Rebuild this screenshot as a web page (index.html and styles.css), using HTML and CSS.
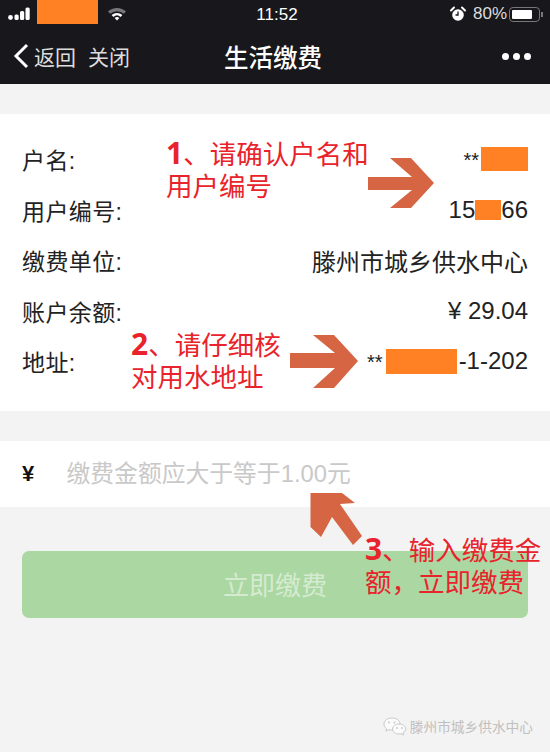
FILE: index.html
```html
<!DOCTYPE html>
<html lang="zh-CN">
<head>
    <meta charset="UTF-8">
    <title>生活缴费</title>
    <link rel="stylesheet" href="styles.css">
</head>
<body>
    <div class="page">
        <header class="top">
            <div class="status">
                <div class="status-left">
                    <svg class="signal" width="24" height="14" viewBox="0 0 24 14">
                        <circle cx="2.5" cy="10.5" r="2.4" fill="#fff"/>
                        <rect x="6.5" y="7.5" width="4.2" height="5.5" rx="1.5" fill="#fff"/>
                        <rect x="12" y="4" width="4.2" height="9" rx="1.5" fill="#fff"/>
                        <rect x="17.5" y="0.5" width="4.2" height="12.5" rx="1.5" fill="#fff"/>
                    </svg>
                    <span class="blot blot-carrier"></span>
                    <svg class="wifi" width="20" height="14" viewBox="0 0 20 14">
                        <path d="M1 4.5 A13 13 0 0 1 19 4.5 L16.8 6.8 A10 10 0 0 0 3.2 6.8 Z" fill="#77777a"/>
                        <path d="M4.6 8 A8 8 0 0 1 15.4 8 L13.6 9.9 A5.4 5.4 0 0 0 6.4 9.9 Z" fill="#fff"/>
                        <path d="M7.6 11 A3.6 3.6 0 0 1 12.4 11 L10 13.6 Z" fill="#fff"/>
                    </svg>
                </div>
                <div class="clock">11:52</div>
                <div class="status-right">
                    <svg width="16" height="16" viewBox="0 0 16 16">
                        <circle cx="8" cy="9" r="5.8" fill="#fff"/>
                        <path d="M8 5.5 V9 H5.5" fill="none" stroke="#18181c" stroke-width="1.3"/>
                        <path d="M1 4.5 L4 1.5 M15 4.5 L12 1.5" stroke="#fff" stroke-width="2" stroke-linecap="round"/>
                    </svg>
                    <span class="battery-text">80%</span>
                    <span class="battery"><span class="battery-level"></span></span>
                    <span class="battery-tip"></span>
                </div>
            </div>
            <nav class="nav">
                <div class="nav-left">
                    <svg width="16" height="26" viewBox="0 0 16 26">
                        <path d="M14 2 L3 13 L14 24" fill="none" stroke="#fff" stroke-width="3"/>
                    </svg>
                    <span class="nav-back">返回</span>
                    <span class="nav-close">关闭</span>
                </div>
                <div class="nav-title">生活缴费</div>
                <div class="nav-more"><i></i><i></i><i></i></div>
            </nav>
        </header>

        <section class="info">
            <div class="row"><span class="label">户名:</span><span><span class="stars">**</span><span class="blot blot-name"></span></span></div>
            <div class="row"><span class="label">用户编号:</span><span>15<span class="blot blot-code"></span>66</span></div>
            <div class="row"><span class="label">缴费单位:</span><span>滕州市城乡供水中心</span></div>
            <div class="row"><span class="label">账户余额:</span><span>¥ 29.04</span></div>
            <div class="row"><span class="label">地址:</span><span><span class="stars">**</span><span class="blot blot-addr"></span>-1-202</span></div>
        </section>

        <section class="amount">
            <span class="yen">¥</span>
            <input class="amount-input" type="text" placeholder="缴费金额应大于等于1.00元">
        </section>

        <div class="pay"><button class="pay-button" disabled>立即缴费</button></div>

        <footer class="mark">
            <svg width="24" height="19" viewBox="0 0 24 19">
                <path d="M9 1 C4.500 1 1 3.600 1 7 C1 9 2 10.500 3.500 11.600 L3 14 L5.800 12.600 C6.800 12.900 7.800 13 9 13 C13.500 13 17 10.400 17 7 C17 3.600 13.500 1 9 1 Z" fill="#fbfbfb" stroke="#c8c8c8"/>
                <path d="M16 7 C12.500 7 9.500 9.300 9.500 12 C9.500 14.700 12.500 17 16 17 C16.800 17 17.500 16.900 18.200 16.700 L20.500 18 L20 15.700 C21.600 14.700 22.800 13.400 22.800 12 C22.800 9.300 19.500 7 16 7 Z" fill="#fbfbfb" stroke="#c8c8c8"/>
                <circle cx="6" cy="5.500" r="1" fill="#c8c8c8"/>
                <circle cx="11.500" cy="5.500" r="1" fill="#c8c8c8"/>
                <circle cx="14" cy="11" r="0.900" fill="#c8c8c8"/>
                <circle cx="19" cy="11" r="0.900" fill="#c8c8c8"/>
            </svg>
            <span>滕州市城乡供水中心</span>
        </footer>

        <!-- annotations drawn over the screenshot -->
        <p class="note note-1"><b>1</b>、请确认户名和<br>用户编号</p>
        <p class="note note-2"><b>2</b>、请仔细核<br>对用水地址</p>
        <p class="note note-3"><b>3</b>、输入缴费金<br>额，立即缴费</p>
        <svg class="arrows" width="550" height="752" viewBox="0 0 550 752">
            <path d="M368 177 H412 L390 158 H411 L434 183 L411 208 H390 L412 190 H368 Z"/>
            <path d="M290 353 H335 L313 335 H334 L358 361 L334 388 H313 L335 368 H290 Z"/>
            <path d="M310.500 493 H342 L355 503 L340 504 L362 536 L353 545 L332 517 L321 537 L310.500 527 Z"/>
        </svg>
    </div>
</body>
</html>
```

FILE: styles.css
```css
* {
    box-sizing: border-box;
}
body {
    margin: 0;
    background: #f3f3f3;
    color: #222;
    font-family: "Liberation Sans", "Noto Sans CJK SC", sans-serif;
}
.page {
    position: relative;
    width: 550px;
    height: 752px;
    overflow: hidden;
}
.top {
    height: 84px;
    background: #18181c;
    color: #fff;
}
.status {
    display: flex;
    justify-content: space-between;
    align-items: center;
    height: 28px;
    padding: 0 7px 0 8px;
    position: relative;
}
.status-left, .status-right {
    display: flex;
    align-items: center;
}
.status-right {
    gap: 7px;
}
.blot {
    display: inline-block;
    background: #ff8124;
}
.blot-carrier {
    width: 61px;
    height: 24px;
    margin: 0 9px 4px 5px;
}
.clock {
    position: absolute;
    left: 4px;
    right: 0;
    text-align: center;
    font-size: 17px;
    padding-top: 1px;
}
.battery-text {
    font-size: 17px;
    color: #ddd;
    margin-right: -5px;
}
.battery {
    display: block;
    width: 31px;
    height: 15px;
    padding: 2px;
    border: 1px solid #777;
    border-radius: 4px;
}
.battery-level {
    display: block;
    width: 80%;
    height: 100%;
    background: #fff;
    border-radius: 1px;
}
.battery-tip {
    width: 2px;
    height: 5px;
    margin-left: -6px;
    background: #777;
}
.nav {
    display: flex;
    align-items: center;
    justify-content: space-between;
    height: 56px;
    padding: 0 19px 0 13px;
    position: relative;
}
.nav-left {
    display: flex;
    align-items: center;
    font-size: 21px;
    color: #ddd;
}
.nav-back {
    margin-left: 5px;
}
.nav-close {
    margin-left: 12px;
}
.nav-title {
    position: absolute;
    left: 0;
    right: 4px;
    text-align: center;
    font-size: 24.500px;
    font-weight: 500;
}
.nav-more {
    display: flex;
    gap: 4px;
}
.nav-more i {
    width: 7px;
    height: 7px;
    border-radius: 50%;
    background: #fff;
}
.info {
    margin-top: 30px;
    padding: 20px 22px 24.500px;
    background: #fff;
    font-size: 24px;
}
.row {
    display: flex;
    justify-content: space-between;
    align-items: center;
    height: 50.500px;
}
.label {
    font-size: 23px;
    letter-spacing: 0.400px;
}
.stars {
    font-size: 20px;
}
.blot-name {
    width: 47px;
    height: 24px;
    margin-left: 2px;
    vertical-align: -4px;
}
.blot-code {
    width: 26px;
    height: 20px;
    vertical-align: -2px;
}
.blot-addr {
    width: 71px;
    height: 25px;
    margin: 0 2px 0 3px;
    vertical-align: -5px;
}
.amount {
    display: flex;
    align-items: center;
    height: 66px;
    margin-top: 30px;
    padding: 0 22px;
    background: #fff;
}
.yen {
    width: 44.500px;
    font-size: 22px;
    font-weight: bold;
    color: #111;
}
.amount-input {
    flex: 1;
    border: none;
    padding: 0;
    font: inherit;
    font-size: 23.800px;
    background: transparent;
}
.amount-input::placeholder {
    color: #c9c9c9;
}
.pay {
    padding: 44px 22px 0;
}
.pay-button {
    display: block;
    width: 100%;
    height: 67px;
    border: none;
    border-radius: 7px;
    background: #abd7a2;
    color: #d5ebd0;
    font: inherit;
    font-size: 26px;
    padding: 0 0 3px;
}
.mark {
    display: flex;
    justify-content: flex-end;
    align-items: center;
    gap: 3px;
    margin-top: 98px;
    padding-right: 17px;
    font-size: 13.700px;
    color: #c0c0c0;
}
.note {
    position: absolute;
    margin: 0;
    font-size: 26.500px;
    line-height: 32px;
    color: #e8232b;
    white-space: nowrap;
}
.note b {
    font-size: 30px;
    font-family: "Noto Sans", sans-serif;
}
.note-1 {
    left: 166px;
    top: 137px;
}
.note-2 {
    left: 131px;
    top: 328px;
}
.note-3 {
    left: 365px;
    top: 533px;
}
.arrows {
    position: absolute;
    left: 0;
    top: 0;
    fill: #d66544;
}
```
